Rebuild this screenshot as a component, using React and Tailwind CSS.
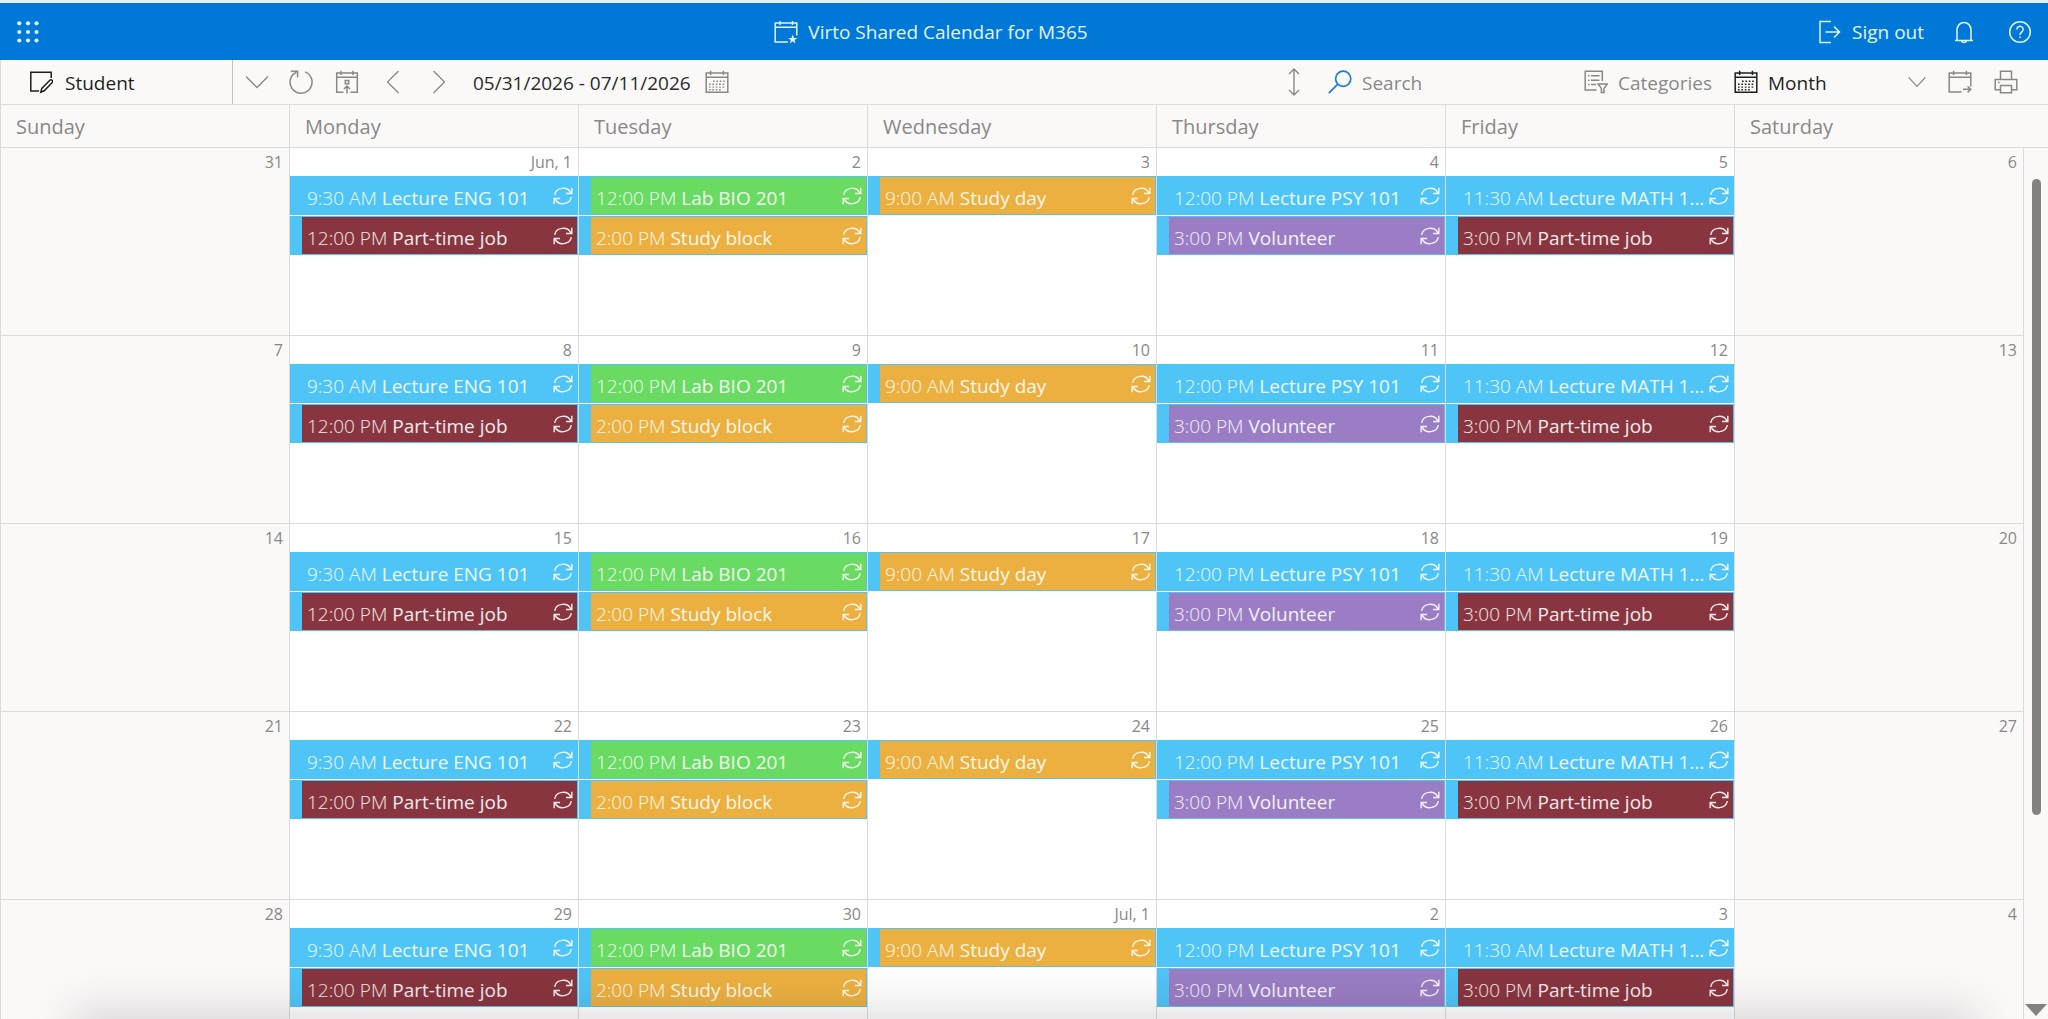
import clsx from "clsx";

const DAYS = [
  "Sunday",
  "Monday",
  "Tuesday",
  "Wednesday",
  "Thursday",
  "Friday",
  "Saturday",
];

const WEEKS = [
  ["31", "Jun, 1", "2", "3", "4", "5", "6"],
  ["7", "8", "9", "10", "11", "12", "13"],
  ["14", "15", "16", "17", "18", "19", "20"],
  ["21", "22", "23", "24", "25", "26", "27"],
  ["28", "29", "30", "Jul, 1", "2", "3", "4"],
];

const COLORS = {
  blue: "bg-[#4fc4f7]",
  maroon: "bg-[#88353f]",
  green: "bg-[#69da62]",
  orange: "bg-[#ebb040]",
  purple: "bg-[#9a7dc4]",
};

// every week has the same recurring schedule, keyed by day index
const SCHEDULE = {
  1: [
    { time: "9:30 AM", title: "Lecture ENG 101", color: "blue" },
    { time: "12:00 PM", title: "Part-time job", color: "maroon" },
  ],
  2: [
    { time: "12:00 PM", title: "Lab BIO 201", color: "green" },
    { time: "2:00 PM", title: "Study block", color: "orange" },
  ],
  3: [{ time: "9:00 AM", title: "Study day", color: "orange" }],
  4: [
    { time: "12:00 PM", title: "Lecture PSY 101", color: "blue" },
    { time: "3:00 PM", title: "Volunteer", color: "purple" },
  ],
  5: [
    { time: "11:30 AM", title: "Lecture MATH 101", color: "blue" },
    { time: "3:00 PM", title: "Part-time job", color: "maroon" },
  ],
};

function Icon({ className, children, size = 24, stroke = 1.5 }) {
  return (
    <svg
      width={size}
      height={size}
      viewBox="0 0 24 24"
      fill="none"
      stroke="currentColor"
      strokeWidth={stroke}
      className={clsx("shrink-0", className)}
      aria-hidden="true"
    >
      {children}
    </svg>
  );
}

function WaffleIcon() {
  return (
    <Icon>
      {[3.3, 12, 20.5].map((y) =>
        [3.3, 12, 20.5].map((x) => (
          <circle
            key={`${x}-${y}`}
            cx={x}
            cy={y}
            r="2.1"
            fill="currentColor"
            stroke="none"
          />
        )),
      )}
    </Icon>
  );
}

function CalendarStarIcon() {
  return (
    <Icon>
      <path d="M14 22H1.2V3H22.8V15.5M1.2 7.2H22.8M6 1V5M18.5 1V5" />
      <path
        d="M18.7 14.6l1.2 3.3h3.5l-2.8 2.1 1 3.4-2.9-2.1-2.9 2.1 1-3.4-2.8-2.1h3.5z"
        fill="currentColor"
        stroke="none"
      />
    </Icon>
  );
}

function CalendarGridIcon({ className }) {
  return (
    <Icon className={className}>
      <path d="M1.2 3H22.8V22.2H1.2zM1.2 7.2H22.8M5.6 .8V5M18.4 .8V5" />
      <path
        d="M8 11.3H21M4 14.3H21M4 17.1H21M4 19.7H17"
        strokeDasharray="1.6 1.8"
        strokeWidth="1.4"
      />
    </Icon>
  );
}

function RepeatIcon() {
  return (
    <Icon size={20} stroke={1.7}>
      <path d="M2 10.6A10.3 9.6 0 0 1 21.6 8.6M22.6 2.2V9H15.6" />
      <path d="M22 13.4A10.3 9.6 0 0 1 2.4 15.4M1.4 21.8V15H8.4" />
    </Icon>
  );
}

function ChevronIcon({ className }) {
  return (
    <Icon className={className} stroke={1.3}>
      <path d="M1 6.5L12 17.5L23 6.5" />
    </Icon>
  );
}

function IconButton({ label, className, children }) {
  return (
    <button
      type="button"
      aria-label={label}
      className={clsx("flex cursor-pointer items-center", className)}
    >
      {children}
    </button>
  );
}

function TopBar() {
  return (
    <header className="flex h-[60px] items-center justify-between border-t-[3px] border-[#e3f1f1] bg-[#0078d7] px-4 text-[#e3f3ff]">
      <IconButton label="App launcher">
        <WaffleIcon />
      </IconButton>
      <div className="flex items-center gap-2.5 pl-1">
        <CalendarStarIcon />
        <h1 className="pt-0.5 text-[19px]">Virto Shared Calendar for M365</h1>
      </div>
      <div className="flex items-center">
        <button
          type="button"
          className="mr-7 flex cursor-pointer items-center gap-2.5"
        >
          <Icon>
            <path d="M13 1.5H2V22.5H13M7.5 12H21.5M16 6.5L21.5 12L16 17.5" />
          </Icon>
          <span className="pt-0.5 text-[19px]">Sign out</span>
        </button>
        <IconButton label="Notifications" className="mr-8">
          <Icon>
            <path d="M3 20.4H21M5 20.4V10a7 7.6 0 0 1 14 0V20.4M9.4 20.6a2.7 2.7 0 0 0 5.2 0" />
          </Icon>
        </IconButton>
        <IconButton label="Help">
          <Icon>
            <circle cx="12" cy="12" r="10.3" />
            <path d="M8.9 9.4a3.1 3.1 0 1 1 4.9 2.5c-1.2.9-1.8 1.4-1.8 3" />
            <path d="M12 16.4V18" />
          </Icon>
        </IconButton>
      </div>
    </header>
  );
}

function Toolbar() {
  return (
    <div className="flex h-[45px] items-center border-b border-l border-[#dddbd9] bg-[#faf9f8] text-[#8a8886]">
      <label className="flex h-full w-[232px] items-center gap-3 border-r border-[#c4c2c0] pl-7 text-[#1f1f1f]">
        <Icon>
          <path d="M10 21H1.8V2.2H22.2V8" />
          <path d="M11.8 22.2l1-3.8 8-8.2a1.7 1.7 0 0 1 2.4 2.4l-8 8.2z" />
        </Icon>
        <select
          aria-label="Calendar view"
          className="w-36 appearance-none bg-transparent pt-0.5 text-[19px] outline-none"
        >
          <option>Student</option>
        </select>
      </label>
      <IconButton label="Views" className="ml-3">
        <ChevronIcon />
      </IconButton>
      <IconButton label="Refresh" className="ml-5">
        <Icon>
          <path d="M16 1.9A11 11 0 1 1 7.4 2.2M1.8 1.2H8.6V7.6" />
        </Icon>
      </IconButton>
      <IconButton label="Today" className="ml-5.5">
        <Icon>
          <path d="M8.5 22.2H1.7V3H22.3V22.2H15.5M1.7 7.2H22.3M6 .8V5M18 .8V5" />
          <path d="M10.3 10.5H13.7V13.7H10.3zM12 23.5V16.4M9 19L12 16L15 19" />
        </Icon>
      </IconButton>
      <IconButton label="Previous" className="ml-5.5">
        <Icon stroke={1.3}>
          <path d="M17.5 1L6.5 12L17.5 23" />
        </Icon>
      </IconButton>
      <IconButton label="Next" className="ml-5.5">
        <Icon stroke={1.3}>
          <path d="M6.5 1L17.5 12L6.5 23" />
        </Icon>
      </IconButton>
      <button
        type="button"
        className="ml-5.5 flex cursor-pointer items-center gap-3.5"
      >
        <span className="pt-0.5 text-[19px] text-[#2b2b2b]">
          05/31/2026 - 07/11/2026
        </span>
        <CalendarGridIcon />
      </button>

      <div className="ml-auto flex items-center">
        <IconButton label="Expand">
          <svg
            width="12"
            height="28"
            viewBox="0 0 12 28"
            fill="none"
            stroke="currentColor"
            strokeWidth="1.4"
            aria-hidden="true"
          >
            <path d="M6 1V27M1 6L6 1L11 6M1 22L6 27L11 22" />
          </svg>
        </IconButton>
        <label className="ml-7 flex items-center gap-2.5">
          <Icon className="text-[#1a7fd9]" stroke={1.7}>
            <circle cx="15.2" cy="8.8" r="7.6" />
            <path d="M9.8 14.2L.8 23.2" />
          </Icon>
          <input
            type="search"
            placeholder="Search"
            aria-label="Search"
            className="w-[212px] bg-transparent pt-0.5 text-[19px] outline-none placeholder:text-[#8a8886]"
          />
        </label>
        <button
          type="button"
          className="ml-2.5 flex cursor-pointer items-center gap-2.5"
        >
          <Icon>
            <path d="M12.5 20H1.2V1.2H18.3V11" />
            <path d="M4 5.8H5.6M7 5.8H15.5M4 10.2H5.6M7 10.2H15.5M4 14.6H5.6M7 14.6H12" />
            <path d="M14 14H23.3L20 18.4V22.6H17.4V18.4z" />
          </Icon>
          <span className="pt-0.5 text-[19px]">Categories</span>
        </button>
        <label className="ml-5.5 flex items-center gap-2.5 text-[#1f1f1f]">
          <CalendarGridIcon />
          <select
            aria-label="Period"
            className="w-[138px] appearance-none bg-transparent pt-0.5 text-[19px] outline-none"
          >
            <option>Month</option>
          </select>
          <Icon
            className="pointer-events-none -ml-2 text-[#8a8886]"
            size={18}
            stroke={1.5}
          >
            <path d="M1 6L12 18L23 6" />
          </Icon>
        </label>
        <IconButton label="Export" className="ml-5.5">
          <Icon>
            <path d="M13.5 22H1.2V3H22.8V16.5M1.2 7.2H22.8M5.6 .8V5M18.4 .8V5" />
            <path d="M15 19.3H22.5M19.6 16.2L22.7 19.3L19.6 22.4" />
          </Icon>
        </IconButton>
        <IconButton label="Print" className="ml-5.5 mr-[30px]">
          <Icon>
            <path d="M6.5 9.5V1.2H17.5V9.5M6.5 19.8H1.2V9.5H22.8V19.8H17.5M6.5 15.6H17.5V22.8H6.5z" />
            <path d="M4 12.5H5.6" />
          </Icon>
        </IconButton>
      </div>
    </div>
  );
}

function Event({ time, title, color }) {
  return (
    <li className="border border-l-[12px] border-[#4fc4f7]">
      <a
        href="#event"
        className={clsx(
          "flex h-[37px] items-center gap-0.5 pl-[5px] pr-1 text-[19px] text-white/90",
          COLORS[color],
        )}
      >
        <span className="min-w-0 flex-1 truncate pt-1.5">
          <span className="font-light">{time}</span> {title}
        </span>
        <RepeatIcon />
      </a>
    </li>
  );
}

function MonthGrid() {
  return (
    <table className="w-full table-fixed border-separate border-spacing-0">
      <colgroup>
        {DAYS.map((day) => (
          <col key={day} />
        ))}
        <col className="w-6" />
      </colgroup>
      <thead>
        <tr>
          {DAYS.map((day, i) => (
            <th
              key={day}
              scope="col"
              colSpan={i === 6 ? 2 : 1}
              className={clsx(
                "h-[43px] border-b border-[#dddbd9] bg-[#faf9f8] pb-0 pl-[15px] pt-0.5 text-left text-[20px] font-normal text-[#8a8886]",
                i < 6 && "border-r",
              )}
            >
              {day}
            </th>
          ))}
        </tr>
      </thead>
      <tbody>
        {WEEKS.map((week, w) => (
          <tr key={w}>
            {week.map((date, i) => (
              <td
                key={date}
                className={clsx(
                  "h-[188px] border-b border-r border-[#dddbd9] p-0 align-top",
                  i === 0 || i === 6 ? "bg-[#faf9f8]" : "bg-white",
                )}
              >
                <div className="h-7 pr-1.5 pt-0.5 text-right text-[16px] text-[#8a8886]">
                  {date}
                </div>
                <ul className="flex flex-col gap-px">
                  {(SCHEDULE[i] || []).map((event) => (
                    <Event key={event.title} {...event} />
                  ))}
                </ul>
              </td>
            ))}
            <td className="bg-[#faf9f8] p-0" />
          </tr>
        ))}
      </tbody>
    </table>
  );
}

export default function App() {
  return (
    <div className="flex h-screen flex-col overflow-hidden bg-white font-['Open_Sans','Noto_Sans',sans-serif]">
      <TopBar />
      <Toolbar />
      <main className="relative min-h-0 flex-1 overflow-hidden border-l border-[#dddbd9]">
        <MonthGrid />
        {/* scrollbar */}
        <div className="absolute bottom-0 right-0 top-[43px] flex w-6 flex-col items-center pb-[3px] pt-[31px]">
          <div className="h-[76%] w-[9px] rounded-full bg-[#838280]" />
          <svg
            width="22"
            height="12"
            viewBox="0 0 22 12"
            className="mt-auto text-[#838280]"
            aria-hidden="true"
          >
            <path d="M0 0H22L11 12z" fill="currentColor" />
          </svg>
        </div>
        <div className="pointer-events-none absolute left-20 right-20 top-full h-10 shadow-[0_0_45px_8px_rgba(40,30,35,0.16)]" />
      </main>
    </div>
  );
}
